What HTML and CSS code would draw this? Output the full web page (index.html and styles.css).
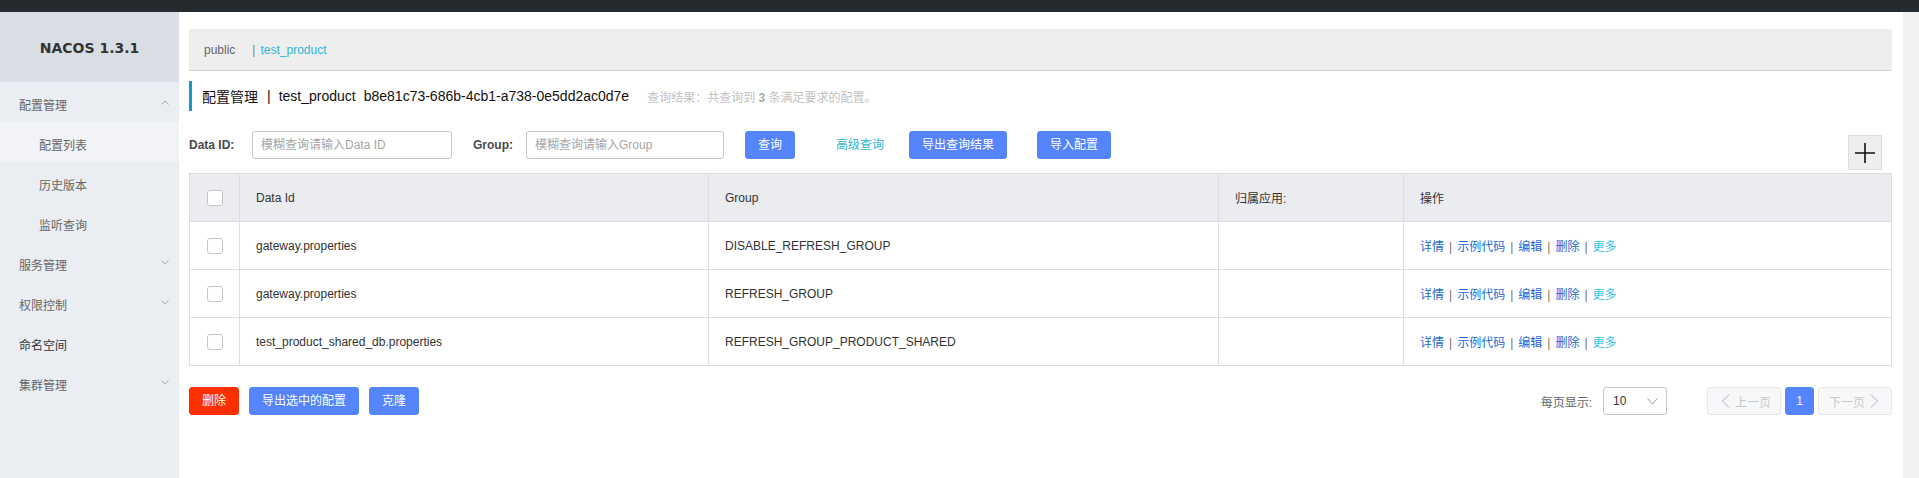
FILE: index.html
```html
<!DOCTYPE html>
<html lang="zh-CN">
<head>
<meta charset="utf-8">
<title>Nacos 配置列表</title>
<link rel="stylesheet" href="styles.css">
</head>
<body>
<div class="topbar"></div>
<div class="layout">
  <aside class="sidebar">
    <div class="logo">NACOS 1.3.1</div>
    <ul class="menu">
      <li class="menu-item">配置管理
        <svg class="arrow" width="8" height="5" viewBox="0 0 8 5"><path d="M0.5 4.5 L4 1 L7.5 4.5" fill="none" stroke="#aaa" stroke-width="1"/></svg>
      </li>
      <li class="menu-sub active">配置列表</li>
      <li class="menu-sub">历史版本</li>
      <li class="menu-sub">监听查询</li>
      <li class="menu-item">服务管理
        <svg class="arrow" width="8" height="5" viewBox="0 0 8 5"><path d="M0.5 0.5 L4 4 L7.5 0.5" fill="none" stroke="#aaa" stroke-width="1"/></svg>
      </li>
      <li class="menu-item">权限控制
        <svg class="arrow" width="8" height="5" viewBox="0 0 8 5"><path d="M0.5 0.5 L4 4 L7.5 0.5" fill="none" stroke="#aaa" stroke-width="1"/></svg>
      </li>
      <li class="menu-item dark">命名空间</li>
      <li class="menu-item">集群管理
        <svg class="arrow" width="8" height="5" viewBox="0 0 8 5"><path d="M0.5 0.5 L4 4 L7.5 0.5" fill="none" stroke="#aaa" stroke-width="1"/></svg>
      </li>
    </ul>
  </aside>

  <main class="main">
    <div class="crumbs">
      <span class="ns">public</span>
      <span class="ns-sep">|</span>
      <span class="ns-active">test_product</span>
    </div>

    <div class="title">
      <span class="t-main">配置管理</span>
      <span class="t-sep">|</span>
      <span class="t-ns">test_product</span>
      <span class="t-id">b8e81c73-686b-4cb1-a738-0e5dd2ac0d7e</span>
      <span class="t-result">查询结果：共查询到 <b>3</b> 条满足要求的配置。</span>
    </div>

    <div class="filters">
      <label class="f-label f-label-id">Data ID:</label>
      <div class="input input-id">模糊查询请输入Data ID</div>
      <label class="f-label f-label-group">Group:</label>
      <div class="input input-group">模糊查询请输入Group</div>
      <button class="btn btn-primary btn-query">查询</button>
      <a class="adv-link">高级查询</a>
      <button class="btn btn-primary btn-export">导出查询结果</button>
      <button class="btn btn-primary">导入配置</button>
      <button class="plus-btn" aria-label="新建">
        <svg width="20" height="20" viewBox="0 0 20 20"><path d="M0 10 H20 M10 0 V20" stroke="#111" stroke-width="1.6"/></svg>
      </button>
    </div>

    <table class="grid">
      <colgroup>
        <col class="c-check"><col class="c-id"><col class="c-group"><col class="c-app"><col>
      </colgroup>
      <thead>
        <tr>
          <th class="check"><span class="checkbox"></span></th>
          <th>Data Id</th>
          <th>Group</th>
          <th>归属应用:</th>
          <th>操作</th>
        </tr>
      </thead>
      <tbody>
        <tr>
          <td class="check"><span class="checkbox"></span></td>
          <td>gateway.properties</td>
          <td>DISABLE_REFRESH_GROUP</td>
          <td></td>
          <td class="ops"><a>详情</a><span class="op-sep">|</span><a>示例代码</a><span class="op-sep">|</span><a>编辑</a><span class="op-sep">|</span><a>删除</a><span class="op-sep">|</span><a class="more">更多</a></td>
        </tr>
        <tr>
          <td class="check"><span class="checkbox"></span></td>
          <td>gateway.properties</td>
          <td>REFRESH_GROUP</td>
          <td></td>
          <td class="ops"><a>详情</a><span class="op-sep">|</span><a>示例代码</a><span class="op-sep">|</span><a>编辑</a><span class="op-sep">|</span><a>删除</a><span class="op-sep">|</span><a class="more">更多</a></td>
        </tr>
        <tr>
          <td class="check"><span class="checkbox"></span></td>
          <td>test_product_shared_db.properties</td>
          <td>REFRESH_GROUP_PRODUCT_SHARED</td>
          <td></td>
          <td class="ops"><a>详情</a><span class="op-sep">|</span><a>示例代码</a><span class="op-sep">|</span><a>编辑</a><span class="op-sep">|</span><a>删除</a><span class="op-sep">|</span><a class="more">更多</a></td>
        </tr>
      </tbody>
    </table>

    <div class="footer">
      <div class="bulk">
        <button class="btn btn-danger">删除</button>
        <button class="btn btn-primary">导出选中的配置</button>
        <button class="btn btn-primary">克隆</button>
      </div>
      <div class="pager">
        <span class="page-size-label">每页显示:</span>
        <div class="select">
          <span>10</span>
          <svg width="11" height="7" viewBox="0 0 11 7"><path d="M0.5 0.5 L5.5 6 L10.5 0.5" fill="none" stroke="#999" stroke-width="1"/></svg>
        </div>
        <button class="pg-btn pg-prev">
          <svg width="9" height="14" viewBox="0 0 9 14"><path d="M8 0.5 L1.5 7 L8 13.5" fill="none" stroke="#cfd0d4" stroke-width="1.2"/></svg>
          <span>上一页</span>
        </button>
        <button class="pg-num">1</button>
        <button class="pg-btn pg-next">
          <span>下一页</span>
          <svg width="9" height="14" viewBox="0 0 9 14"><path d="M1 0.5 L7.5 7 L1 13.5" fill="none" stroke="#cfd0d4" stroke-width="1.2"/></svg>
        </button>
      </div>
    </div>
  </main>

  <div class="scroll-track"></div>
</div>
</body>
</html>
```

FILE: styles.css
```css
* { box-sizing: border-box; }

html, body {
  margin: 0;
  padding: 0;
  background: #fff;
  font-family: "Liberation Sans", "Noto Sans CJK SC", sans-serif;
  font-size: 12px;
  color: #333;
  overflow: hidden;
}

.topbar {
  height: 12px;
  background: #252a2f;
}

.layout {
  display: flex;
  min-height: calc(100vh - 12px);
}

/* ---------- sidebar ---------- */
.sidebar {
  width: 179px;
  flex: 0 0 179px;
  background: #eaedf1;
}

.logo {
  height: 70px;
  background: #d9dee4;
  display: flex;
  align-items: center;
  justify-content: center;
  font-family: "DejaVu Sans", "Liberation Sans", sans-serif;
  font-weight: bold;
  font-size: 14px;
  color: #333;
  padding-top: 1px;
}

.menu {
  list-style: none;
  margin: 0;
  padding: 0;
}

.menu-item, .menu-sub {
  height: 40px;
  display: flex;
  align-items: center;
  padding-top: 4px;
  color: #666;
  font-size: 12px;
  position: relative;
}

.menu-item { padding-left: 19px; }
.menu-sub { padding-left: 39px; }
.menu-sub.active { background: #f2f3f7; }
.menu-item.dark { color: #333; }

.arrow {
  margin-left: auto;
  margin-right: 10px;
  margin-top: -4px;
}

/* ---------- main ---------- */
.main {
  flex: 1;
  min-width: 0;
  padding: 0 11px 0 10px;
}

.crumbs {
  margin-top: 17px;
  height: 42px;
  background: #eeeeee;
  border-bottom: 1px solid #d0d0d0;
  display: flex;
  align-items: center;
  padding-left: 15px;
  font-size: 12px;
}

.ns { color: #666; margin-right: 17px; }
.ns-sep { color: #7a7f8a; margin-right: 5px; }
.ns-active { color: #2fb7da; }

.title {
  margin-top: 10px;
  height: 30px;
  border-left: 3px solid #1a97cc;
  padding-left: 10px;
  display: flex;
  align-items: center;
  font-size: 14px;
  color: #111;
}

.t-sep { margin: 0 8px 0 9px; }
.t-ns { margin-right: 8px; }
.t-result {
  margin-left: 18px;
  font-size: 12px;
  color: #c3c3c3;
}
.t-result b { color: #aaa; font-weight: bold; }

.filters {
  margin-top: 20px;
  display: flex;
  align-items: flex-start;
}

.f-label {
  height: 28px;
  line-height: 28px;
  font-weight: bold;
  color: #4a4a4a;
  font-size: 12px;
}
.f-label-id { width: 63px; }
.f-label-group { width: 53px; }

.input {
  height: 28px;
  line-height: 26px;
  border: 1px solid #c4c6cf;
  border-radius: 3px;
  padding-left: 8px;
  color: #a6a6a6;
  font-size: 12px;
}
.input-id { width: 200px; margin-right: 21px; }
.input-group { width: 198px; margin-right: 21px; }

.btn {
  height: 28px;
  padding: 0 12px;
  border: 1px solid transparent;
  border-radius: 3px;
  font-family: inherit;
  font-size: 12px;
  color: #fff;
  cursor: pointer;
  line-height: 26px;
}
.btn-primary { background: #5584ff; border-color: #5584ff; }
.btn-danger { background: #ff3000; border-color: #ff3000; }

.btn-query { margin-right: 41px; }
.adv-link {
  line-height: 28px;
  color: #2fb7da;
  margin-right: 25px;
}
.btn-export { margin-right: 30px; }

.plus-btn {
  margin-left: auto;
  margin-right: 10px;
  margin-top: 4px;
  width: 34px;
  height: 35px;
  background: #eeeeee;
  border: 1px solid #dcdcdc;
  padding: 0;
  display: flex;
  align-items: center;
  justify-content: center;
}

/* ---------- table ---------- */
.grid {
  margin-top: 3px;
  width: 100%;
  border-collapse: collapse;
  table-layout: fixed;
  border: 1px solid #dcdee3;
}

.c-check { width: 50px; }
.c-id { width: 469px; }
.c-group { width: 510px; }
.c-app { width: 185px; }

.grid th, .grid td {
  height: 48px;
  border: 1px solid #dcdee3;
  padding: 0 16px;
  text-align: left;
  font-size: 12px;
  color: #333;
  font-weight: normal;
}

.grid thead th { background: #ebecf0; }

.grid .check { padding: 0; text-align: center; }

.checkbox {
  display: inline-block;
  width: 16px;
  height: 16px;
  border: 1px solid #c4c6cf;
  border-radius: 3px;
  background: #fff;
  vertical-align: middle;
}

.ops a { color: #2568d6; }
.ops a.more { color: #33c3e3; }
.op-sep { color: #7a6f66; margin: 0 5px; }

/* ---------- footer ---------- */
.footer {
  margin-top: 21px;
  display: flex;
  align-items: center;
  justify-content: space-between;
}

.bulk { display: flex; gap: 10px; }

.pager { display: flex; align-items: center; }

.page-size-label { color: #666; margin-right: 11px; }

.select {
  width: 64px;
  height: 28px;
  border: 1px solid #c4c6cf;
  border-radius: 3px;
  display: flex;
  align-items: center;
  justify-content: space-between;
  padding: 0 8px 0 9px;
  color: #333;
  margin-right: 40px;
}

.pg-btn {
  height: 28px;
  width: 74px;
  background: #f7f8fa;
  border: 1px solid #e6e7eb;
  border-radius: 3px;
  color: #c8c8c8;
  font-family: inherit;
  font-size: 12px;
  display: flex;
  align-items: center;
  gap: 5px;
  padding: 0;
}
.pg-prev { padding-left: 13px; }
.pg-next { padding-left: 10px; }

.pg-num {
  width: 29px;
  height: 28px;
  margin: 0 4px;
  background: #5584ff;
  border: 1px solid #5584ff;
  border-radius: 3px;
  color: #fff;
  font-family: inherit;
  font-size: 12px;
  padding: 0;
}

.scroll-track {
  width: 16px;
  flex: 0 0 16px;
  background: #f1f1f1;
}
```
